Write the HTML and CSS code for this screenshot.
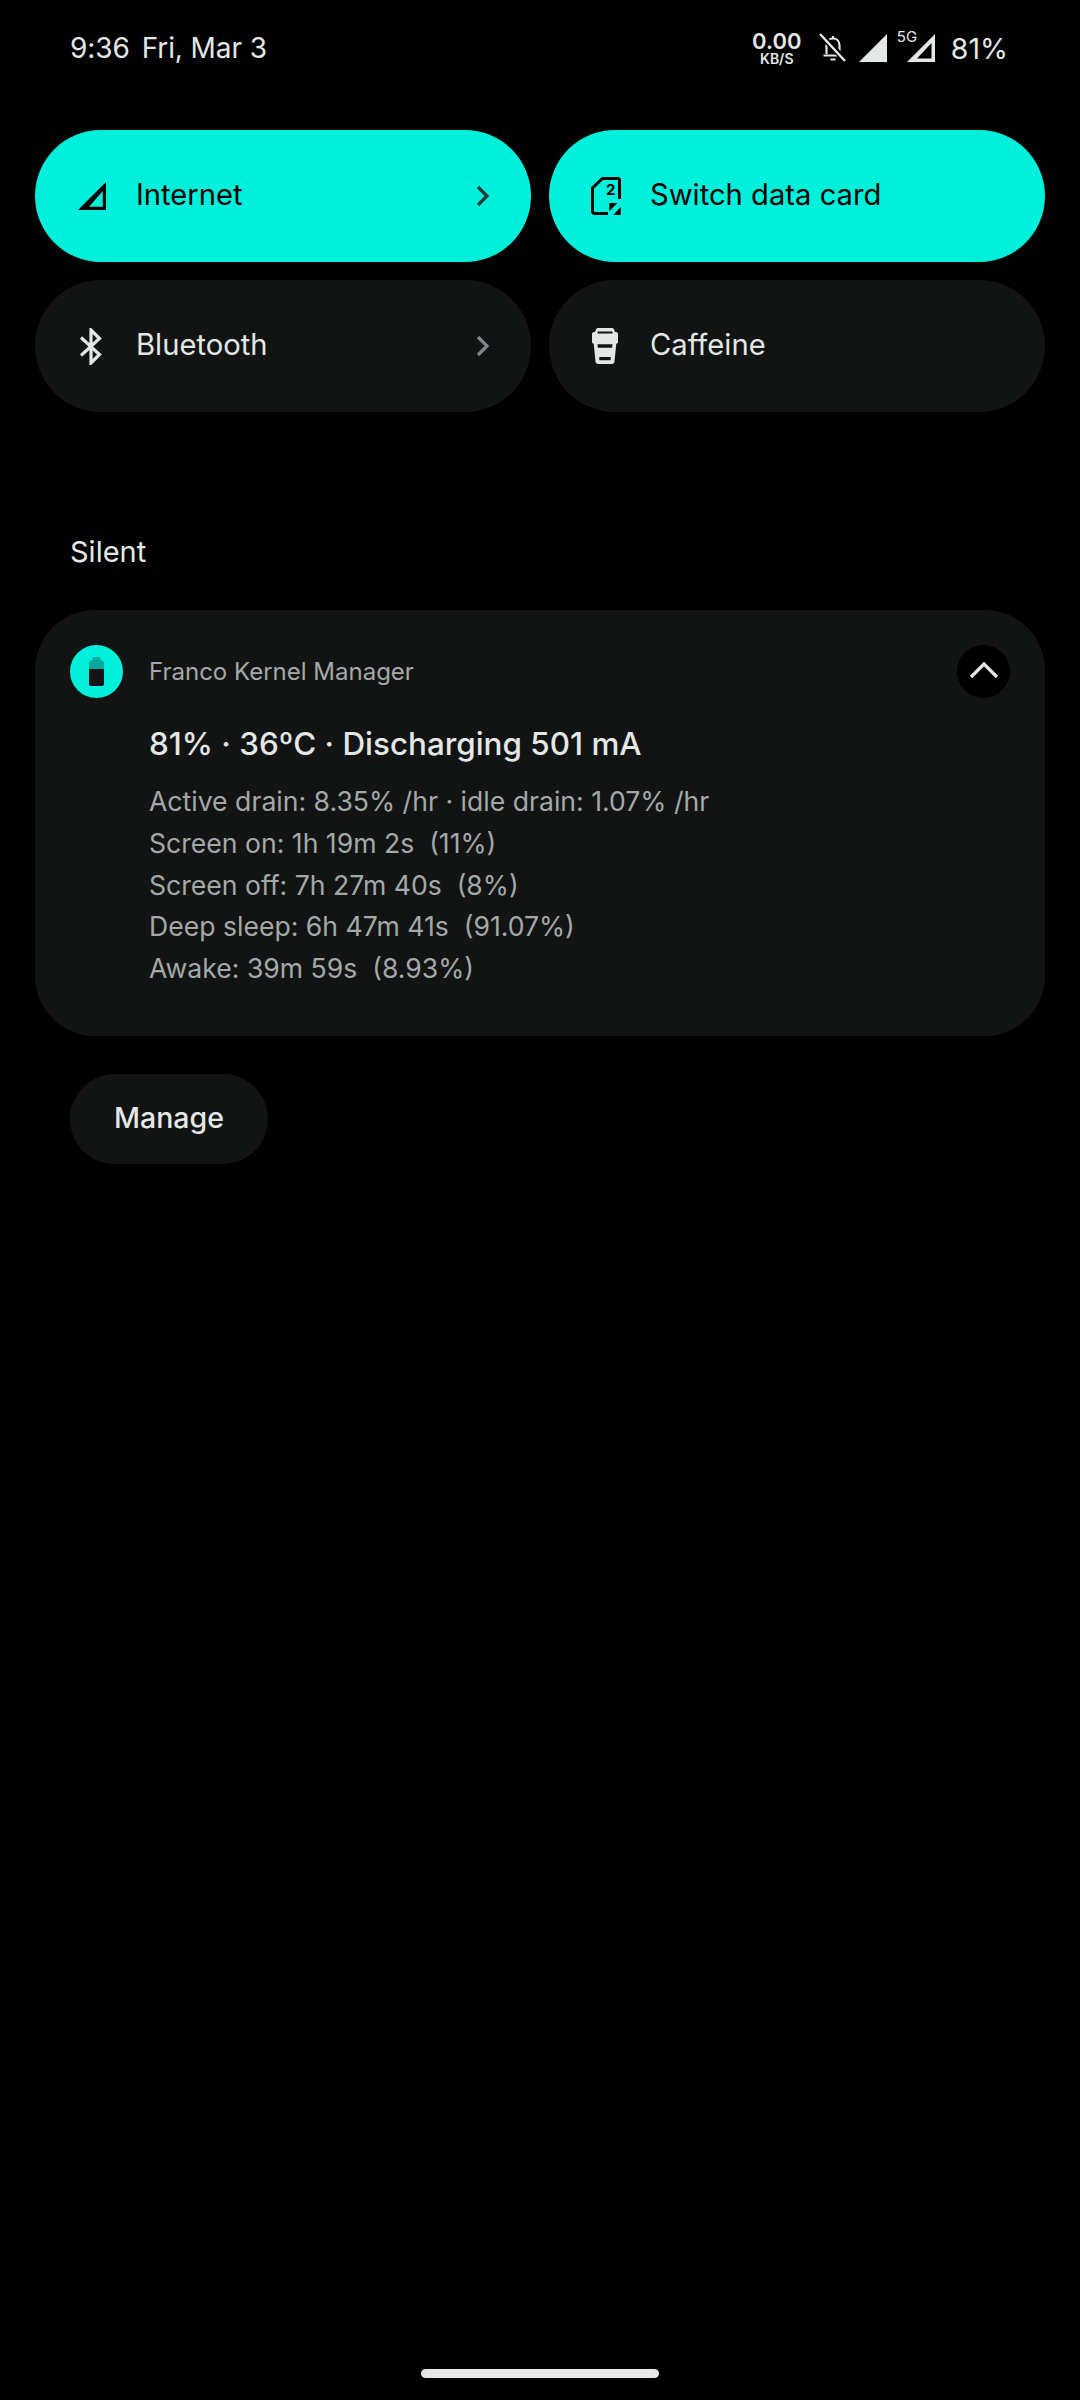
FILE: index.html
```html
<!DOCTYPE html>
<html lang="en">
<head>
<meta charset="utf-8">
<title>Notification shade</title>
<link rel="stylesheet" href="styles.css">
</head>
<body>
<div class="shade">
  <header class="status">
    <div class="clock"><span>9:36</span><span>Fri, Mar 3</span></div>
    <div class="sys">
      <div class="speed"><span class="speed-n">0.00</span><span class="speed-u">KB/S</span></div>
      <svg class="i-bell" viewBox="0 0 28 30"><path d="M7.500 21V12.500C7.500 8.500 10 5.500 14 5.500S20.500 8.500 20.500 12.500V21M4.500 22.500H23.500M11.500 26.500H16.500M14 3V5" fill="none" stroke="#e3e8e7" stroke-width="2.200"/><path d="M1 1L27 28" stroke="#000" stroke-width="6"/><path d="M1 1L26 28" stroke="#e3e8e7" stroke-width="2.400"/></svg>
      <svg class="i-sig" viewBox="0 0 28 28"><path d="M28 0V28H0Z" fill="#e3e8e7"/></svg>
      <div class="sig5"><span class="fiveg">5G</span><svg class="i-sig" viewBox="0 0 28 28"><path fill-rule="evenodd" d="M28 0V28H0ZM24.500 9L10 24.500H24.500Z" fill="#e3e8e7"/></svg></div>
      <span class="batt">81%</span>
    </div>
  </header>

  <section class="tiles">
    <div class="tile on">
      <svg class="t-icon" viewBox="0 0 28 28"><path fill-rule="evenodd" d="M28 0V28H0ZM24.800 9L11 24.800H24.800Z" fill="#000"/></svg>
      <span class="t-label">Internet</span>
      <svg class="chev" viewBox="0 0 14 22"><path d="M2 2L11 11L2 20" fill="none" stroke="#2a3534" stroke-width="3.200"/></svg>
    </div>
    <div class="tile on">
      <svg class="t-icon t-sim" viewBox="0 0 30 38"><path d="M28.500 22V3.500C28.500 2.300 27.700 1.500 26.500 1.500H11.500L1.500 11V34C1.500 35.500 2.500 36.500 4 36.500H17" fill="none" stroke="#000" stroke-width="3"/><path d="M18.300 26H26.300L18.300 34.300ZM29.700 30V38H22.300Z" fill="#000"/><text x="19.700" y="17.500" class="sim2">2</text></svg>
      <span class="t-label">Switch data card</span>
    </div>
    <div class="tile">
      <svg class="t-icon t-bt" viewBox="0 0 24 37"><path d="M2 9.500L20.500 26.500L12 35V2L20.500 10.500L2 27.500" fill="none" stroke="#e3e8e7" stroke-width="3.200"/></svg>
      <span class="t-label">Bluetooth</span>
      <svg class="chev" viewBox="0 0 14 22"><path d="M2 2L11 11L2 20" fill="none" stroke="#80868a" stroke-width="3.200"/></svg>
    </div>
    <div class="tile">
      <svg class="t-icon t-cup" viewBox="0 0 26 36"><path fill-rule="evenodd" d="M6 0H20C21 0 21.500 .5 22 1.500L23 4H24C25.200 4 26 5 26 6V14C26 15 25.200 15.700 24.300 15.700L22.500 33.500C22.300 35 21.300 36 20 36H6C4.700 36 3.700 35 3.500 33.500L1.700 15.700C.8 15.700 0 15 0 14V6C0 5 .8 4 2 4H3L4 1.500C4.500 .5 5 0 6 0ZM5.500 3.500V5.500H20.500V3.500ZM5.500 16.300L5.900 19.700H20.100L20.500 16.300ZM7.300 29V32.200H18.700V29Z" fill="#e3e8e7"/></svg>
      <span class="t-label">Caffeine</span>
    </div>
  </section>

  <h2 class="silent">Silent</h2>

  <section class="card">
    <div class="app-badge">
      <svg class="batt-icon" viewBox="0 0 15 29"><path d="M3.500 0H11.500V3.500H13C14 3.500 15 4.500 15 5.500V12H0V5.500C0 4.500 1 3.500 2 3.500H3.500Z" fill="#00a99a"/><path d="M0 12H15V27C15 28 14 29 13 29H2C1 29 0 28 0 27Z" fill="#111414"/></svg>
    </div>
    <div class="card-main">
      <div class="app-name">Franco Kernel Manager</div>
      <div class="note-title">81% · 36ºC · Discharging 501 mA</div>
      <div class="note-body">
        <div>Active drain: 8.35% /hr · idle drain: 1.07% /hr</div>
        <div>Screen on: 1h 19m 2s&nbsp; (11%)</div>
        <div>Screen off: 7h 27m 40s&nbsp; (8%)</div>
        <div>Deep sleep: 6h 47m 41s&nbsp; (91.07%)</div>
        <div>Awake: 39m 59s&nbsp; (8.93%)</div>
      </div>
    </div>
    <div class="collapse">
      <svg viewBox="0 0 30 18"><path d="M2 16L15 3L28 16" fill="none" stroke="#e3e8e7" stroke-width="3.200"/></svg>
    </div>
  </section>

  <div class="manage"><span class="manage-label">Manage</span></div>

  <div class="spacer"></div>
  <div class="home-wrap"><div class="home"></div></div>
</div>
</body>
</html>
```

FILE: styles.css
```css
* { box-sizing: border-box; }
html, body { margin: 0; padding: 0; background: #000; }
body { font-family: "Inter", "Roboto", "Liberation Sans", sans-serif; color: #e3e8e7; }
.shade { width: 1080px; height: 2400px; display: flex; flex-direction: column; }

.status { height: 94px; padding: 2px 72px 0 70px; display: flex; align-items: center; justify-content: space-between; }
.clock { display: flex; gap: 12px; font-size: 28px; letter-spacing: -.1px; }
.sys { display: flex; align-items: center; }
.speed { width: 56px; display: flex; flex-direction: column; align-items: center; line-height: 1; margin-right: 14px; }
.speed-n { font-size: 22px; font-weight: 600; height: 21px; line-height: 21px; }
.speed-u { font-size: 14px; font-weight: 600; height: 14px; line-height: 14px; }
.i-bell { width: 28px; height: 30px; margin-right: 12px; }
.i-sig { width: 28px; height: 28px; display: block; }
.sig5 { position: relative; margin-left: 20px; }
.fiveg { position: absolute; left: -10px; top: -5px; font-size: 15px; line-height: 15px; }
.batt { font-size: 28.5px; margin-left: 16px; }

.tiles { padding: 36px 35px 0; display: grid; grid-template-columns: 496px 496px; gap: 18px; }
.tile { height: 132px; border-radius: 66px; background: #121414; display: flex; align-items: center; padding-left: 43px; padding-right: 41px; }
.tile.on { background: #00f0dc; color: #000; }
.t-icon { width: 28px; height: 28px; flex: none; }
.t-sim { width: 30px; height: 38px; margin-left: -1px; margin-right: -1px; }
.sim2 { font: 700 15px "Inter", sans-serif; text-anchor: middle; fill: #000; }
.t-bt { width: 24px; height: 37px; margin-left: 1px; margin-right: 3px; }
.t-cup { width: 26px; height: 36px; margin-right: 2px; }
.t-label { margin-left: 30px; margin-bottom: 3px; font-size: 29.2px; flex: 1; }
.chev { width: 14px; height: 22px; flex: none; }

.silent { margin: 120px 0 0; padding: 0 70px; height: 40px; font-size: 29px; font-weight: 400; line-height: 40px; }

.card { margin: 38px 35px 0; height: 426px; border-radius: 60px; background: #121414; padding: 35px 35px 0; display: flex; align-items: flex-start; }
.app-badge { width: 53px; height: 53px; border-radius: 50%; background: #00f0dc; display: flex; align-items: center; justify-content: center; flex: none; }
.batt-icon { width: 15px; height: 29px; }
.card-main { margin-left: 26px; flex: 1; }
.app-name { font-size: 24px; color: #a4a9a8; line-height: 53px; }
.note-title { font-size: 31.4px; margin-top: 25px; line-height: 42px; font-weight: 500; }
.note-body { margin-top: 16px; font-size: 26.6px; line-height: 41.8px; color: #a4a9a8; }
.collapse { width: 53px; height: 53px; border-radius: 50%; background: #000; display: flex; align-items: center; justify-content: center; flex: none; }
.collapse svg { width: 30px; height: 18px; margin-top: -4px; }

.manage { margin: 38px 0 0 70px; width: 198px; height: 90px; border-radius: 45px; background: #121414; display: flex; align-items: center; justify-content: center; font-size: 28.5px; font-weight: 500; }
.manage-label { margin-bottom: 3px; }

.spacer { flex: 1; }
.home-wrap { height: 31px; display: flex; justify-content: center; }
.home { width: 238px; height: 9px; border-radius: 5px; background: #e8e8e8; }
```
